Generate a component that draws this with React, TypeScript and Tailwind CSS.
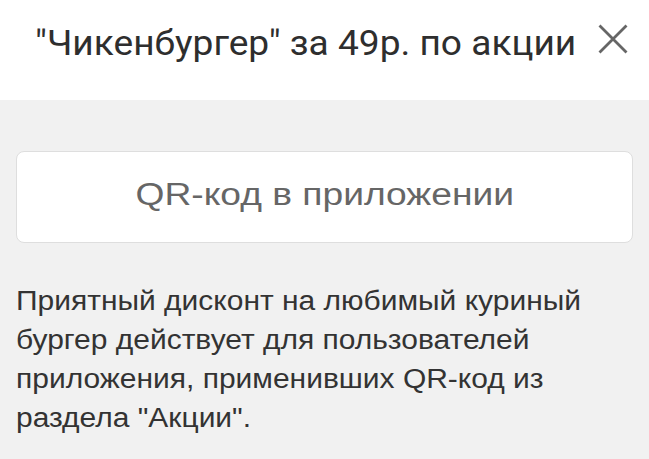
import React from "react";

export default function App() {
  return (
    <div className="w-[649px] h-[459px] bg-[#f1f1f1] flex flex-col overflow-hidden">
      <div className="h-[100px] bg-white flex items-start pl-[35px] pr-[21px] pt-[26px] shrink-0">
        <div className="flex-1 min-w-0">
          <div
            className="text-[35px] text-[#2e2e2e] leading-[35px] whitespace-nowrap origin-left scale-x-[1.06]"
            style={{ fontFamily: "Roboto, sans-serif" }}
          >
            "Чикенбургер" за 49р. по акции
          </div>
        </div>
        <svg width="30" height="30" viewBox="0 0 30 30" className="mt-[-2px] shrink-0">
          <path d="M1.5 1.5 L28.5 28.5 M28.5 1.5 L1.5 28.5" stroke="#666" strokeWidth="2.8" />
        </svg>
      </div>
      <div className="px-4 pt-[51px]">
        <div className="h-[92px] bg-white border border-[#dedede] rounded-[8px] flex items-center justify-center">
          <span
            className="inline-block text-[31px] text-[#666] leading-none mt-[-6px] scale-x-[1.2] whitespace-nowrap"
            style={{ fontFamily: '"Liberation Sans", Arial, sans-serif' }}
          >
            QR-код в приложении
          </span>
        </div>
        <p
          className="mt-[39px] w-[556px] origin-left scale-x-[1.11] text-[27px] leading-[39px] text-[#333]"
          style={{ fontFamily: '"Liberation Sans", Arial, sans-serif' }}
        >
          Приятный дисконт на любимый куриный бургер действует для пользователей приложения, применивших QR-код из раздела "Акции".
        </p>
      </div>
    </div>
  );
}
